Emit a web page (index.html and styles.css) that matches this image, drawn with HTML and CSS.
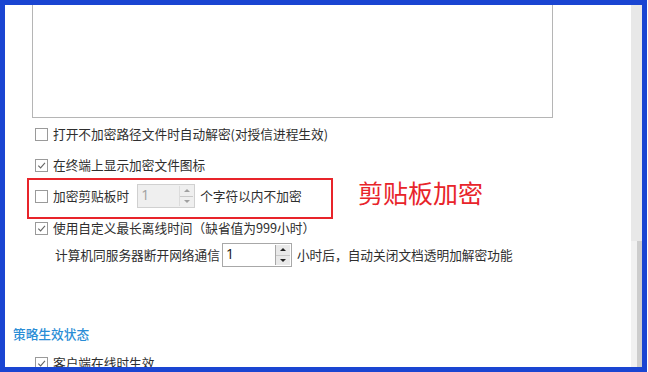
FILE: index.html
```html
<!DOCTYPE html>
<html lang="zh-CN">
<head>
  <meta charset="UTF-8">
  <title>策略设置</title>
  <link rel="stylesheet" href="styles.css">
</head>
<body>
  <div class="frame">
    <div class="panel">
      <div class="content">
        <div class="list-box"></div>

        <div class="row row-1">
          <span class="check"></span>
          <span class="label">打开不加密路径文件时自动解密(对授信进程生效)</span>
        </div>

        <div class="row row-2">
          <span class="check checked">
            <svg viewBox="0 0 12 12"><path d="M2.5 6.2 L5 8.7 L9.8 3.2" /></svg>
          </span>
          <span class="label">在终端上显示加密文件图标</span>
        </div>

        <div class="mark-line">
          <div class="red-box">
            <div class="row">
              <span class="check"></span>
              <span class="label">加密剪贴板时</span>
              <div class="spin disabled">
                <span class="spin-value">1</span>
                <span class="spin-btns">
                  <span class="arrow up"></span>
                  <span class="arrow down"></span>
                </span>
              </div>
              <span class="label after">个字符以内不加密</span>
            </div>
          </div>
          <div class="note">剪贴板加密</div>
        </div>

        <div class="row row-4">
          <span class="check checked">
            <svg viewBox="0 0 12 12"><path d="M2.5 6.2 L5 8.7 L9.8 3.2" /></svg>
          </span>
          <span class="label">使用自定义最长离线时间（缺省值为999小时）</span>
        </div>

        <div class="row row-5">
          <span class="label">计算机同服务器断开网络通信</span>
          <div class="spin wide">
            <span class="spin-value">1</span>
            <span class="spin-btns">
              <span class="arrow up"></span>
              <span class="arrow down"></span>
            </span>
          </div>
          <span class="label after">小时后，自动关闭文档透明加解密功能</span>
        </div>

        <div class="section-title">策略生效状态</div>

        <div class="row row-6">
          <span class="check checked">
            <svg viewBox="0 0 12 12"><path d="M2.5 6.2 L5 8.7 L9.8 3.2" /></svg>
          </span>
          <span class="label">客户端在线时生效</span>
        </div>
      </div>

      <div class="scrollbar">
        <div class="track-top"></div>
        <div class="track-bottom">
          <div class="thumb"></div>
        </div>
      </div>
    </div>
  </div>
</body>
</html>
```

FILE: styles.css
```css
body {
  margin: 0;
  padding: 0;
  background-color: #fff;
  font-family: "Noto Sans CJK SC", "Microsoft YaHei", sans-serif;
  font-size: 12.7px;
  color: #2e2e2e;
}

.frame {
  width: 647px;
  height: 372px;
  box-sizing: border-box;
  border: 5px solid #1a45d2;
  overflow: hidden;
}

.panel {
  display: flex;
  height: 100%;
}

.content {
  flex: 1;
  overflow: hidden;
}

.list-box {
  margin-left: 27px;
  width: 519px;
  height: 112px;
  border: 1px solid #b5b5b5;
  border-top: none;
}

.row {
  display: flex;
  align-items: center;
  height: 16px;
  margin-left: 30px;
  white-space: nowrap;
}

.row-1 {
  margin-top: 8px;
}

.row-2 {
  margin-top: 15px;
}

.row-4 {
  margin-top: 1px;
}

.row-5 {
  height: 24px;
  margin-top: 7px;
  margin-left: 50px;
}

.row-6 {
  margin-top: 13px;
}

.check {
  width: 11px;
  height: 11px;
  border: 1px solid #9a9a9a;
  background-color: #fff;
  margin-right: 5px;
  flex: none;
}

.check svg {
  display: block;
  width: 11px;
  height: 11px;
}

.check svg path {
  fill: none;
  stroke: #666;
  stroke-width: 1.2;
}

.label {
  line-height: 16px;
}

.label.after {
  margin-left: 5px;
}

.mark-line {
  display: flex;
  margin-top: 5px;
}

.red-box {
  margin-left: 22px;
  width: 302px;
  height: 33px;
  border: 2px solid #e8242a;
  padding-top: 4px;
  box-sizing: content-box;
}

.red-box .row {
  height: 24px;
  margin-left: 6px;
}

.note {
  margin-left: 25px;
  margin-top: -1px;
  font-size: 25px;
  line-height: 30px;
  color: #e8242a;
}

.spin {
  display: flex;
  box-sizing: border-box;
  height: 24px;
  border: 1px solid #a8a8a8;
  background-color: #fff;
  margin-left: 8px;
}

.spin.disabled {
  width: 58px;
  background-color: #efefef;
  border-color: #d0d0d0;
  color: #a0a0a0;
}

.spin.wide {
  width: 70px;
  margin-left: 2px;
  color: #111;
}

.spin-value {
  flex: 1;
  padding-left: 3px;
  font-family: "Open Sans", "Noto Sans", sans-serif;
  font-size: 14px;
  line-height: 20px;
}

.spin-btns {
  display: flex;
  flex-direction: column;
  width: 13px;
  margin: 1px 1px 1px 0;
}

.spin.wide .spin-btns {
  width: 14px;
  border-left: 1px solid #a8a8a8;
  background-color: #e9e9e9;
}

.spin.disabled .spin-btns {
  border-left: 1px solid #dcdcdc;
}

.arrow {
  flex: 1;
  display: flex;
  align-items: center;
  justify-content: center;
}

.arrow.up {
  border-bottom: 1px solid #c8c8c8;
}

.arrow::before {
  content: "";
  border-left: 3px solid transparent;
  border-right: 3px solid transparent;
}

.arrow.up::before {
  border-bottom: 3px solid #222;
}

.arrow.down::before {
  border-top: 3px solid #222;
}

.spin.disabled .arrow.up::before {
  border-bottom-color: #a0a0a0;
}

.spin.disabled .arrow.down::before {
  border-top-color: #a0a0a0;
}

.section-title {
  margin-top: 59px;
  margin-left: 8px;
  height: 16px;
  line-height: 16px;
  font-weight: 500;
  color: #2a8dd6;
}

.scrollbar {
  width: 11px;
  display: flex;
  flex-direction: column;
}

.track-top {
  height: 236px;
  background-color: #e8e8e8;
}

.track-bottom {
  flex: 1;
  display: flex;
  background-color: #f1f1f1;
}

.thumb {
  margin-left: 6px;
  flex: 1;
  background-color: #cdcdcd;
}
```
